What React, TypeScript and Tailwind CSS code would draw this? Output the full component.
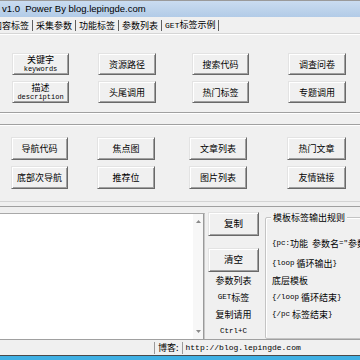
import type { ReactNode } from "react";

const CJK = "font-['Noto_Sans_CJK_SC',sans-serif]";
const MONO = "font-['Liberation_Mono','Noto_Sans_CJK_SC',monospace]";

function WinBtn({ className, children }: { className: string; children: ReactNode }) {
  return (
    <div
      className={[
        "shrink-0 flex flex-col items-center justify-center bg-[#f0f0f0] text-black leading-none",
        "border border-t-[#e3e3e3] border-l-[#e3e3e3] border-r-[#696969] border-b-[#696969]",
        "shadow-[inset_1px_1px_0_#ffffff,inset_-1px_-1px_0_#a0a0a0]",
        className,
      ].join(" ")}
    >
      {children}
    </div>
  );
}

function L({ children }: { children: ReactNode }) {
  return <span className={`${MONO} text-[7.5px]`}>{children}</span>;
}

const tabs = ["内容标签", "采集参数", "功能标签", "参数列表", "GET标签示例"];

export default function App() {
  return (
    <div className={`w-[360px] h-[360px] overflow-hidden bg-[#f0f0f0] flex flex-col ${CJK} text-[9px] text-black`}>
      {/* title bar */}
      <div className="h-[17px] shrink-0 border-t border-[#9a9a9a] bg-gradient-to-b from-[#cadcf0] to-[#b2cbe7] flex items-center pl-[2px]">
        <span className="font-['Liberation_Sans',sans-serif] text-[9.5px] whitespace-pre">v1.0  Power By blog.lepingde.com</span>
      </div>

      {/* tab strip */}
      <div className="h-[17px] shrink-0 flex items-center border-b border-[#d6d6d6] shadow-[0_1px_0_#ffffff] overflow-hidden">
        <div className="flex items-center ml-[-7px] whitespace-nowrap">
          {tabs.map((t) => (
            <div key={t} className="flex items-center">
              <span className="leading-none">
                {t.startsWith("GET") ? (
                  <>
                    <span className={`${MONO} text-[8px]`}>GET</span>标签示例
                  </>
                ) : (
                  t
                )}
              </span>
              <span className="mx-[3px] w-px h-[11px] bg-[#5f5f5f]" />
            </div>
          ))}
        </div>
      </div>

      {/* group 1 */}
      <div className="h-[79px] shrink-0 border-b border-[#a0a0a0] shadow-[0_1px_0_#ffffff] pt-[19px] flex flex-col gap-[6px]">
        <div className="flex h-[22px]">
          <WinBtn className="ml-[12px] w-[57px]">
            <span className="leading-[10px]">关键字</span>
            <span className={`${MONO} text-[7px] leading-[8px]`}>keywords</span>
          </WinBtn>
          <WinBtn className="ml-[29px] w-[58px]">资源路径</WinBtn>
          <WinBtn className="ml-[36px] w-[57px]">搜索代码</WinBtn>
          <WinBtn className="ml-[39px] w-[58px]">调查问卷</WinBtn>
        </div>
        <div className="flex h-[22px]">
          <WinBtn className="ml-[12px] w-[57px]">
            <span className="leading-[10px]">描述</span>
            <span className={`${MONO} text-[7px] leading-[8px]`}>description</span>
          </WinBtn>
          <WinBtn className="ml-[29px] w-[58px]">头尾调用</WinBtn>
          <WinBtn className="ml-[36px] w-[57px]">热门标签</WinBtn>
          <WinBtn className="ml-[39px] w-[58px]">专题调用</WinBtn>
        </div>
      </div>

      {/* group 2 */}
      <div className="mt-[11px] h-[77px] shrink-0 border-t border-[#a0a0a0] shadow-[inset_0_1px_0_#ffffff] pt-[12px] flex flex-col gap-[6px]">
        <div className="flex h-[23px]">
          <WinBtn className="ml-[11px] w-[57px]">导航代码</WinBtn>
          <WinBtn className="ml-[29px] w-[58px]">焦点图</WinBtn>
          <WinBtn className="ml-[34px] w-[58px]">文章列表</WinBtn>
          <WinBtn className="ml-[40px] w-[59px]">热门文章</WinBtn>
        </div>
        <div className="flex h-[23px]">
          <WinBtn className="ml-[11px] w-[57px]">底部次导航</WinBtn>
          <WinBtn className="ml-[29px] w-[58px]">推荐位</WinBtn>
          <WinBtn className="ml-[34px] w-[58px]">图片列表</WinBtn>
          <WinBtn className="ml-[40px] w-[59px]">友情链接</WinBtn>
        </div>
      </div>

      {/* splitter */}
      <div className="h-[11px] shrink-0 border-t border-[#d4d4d4] flex flex-col">
        <div className="mt-[4px] h-[6px] border-t border-[#a0a0a0] bg-[#efefef]" />
      </div>

      {/* bottom area */}
      <div className="h-[127px] shrink-0 flex">
        {/* text area */}
        <div className="shrink-0 w-[205px] mt-[1px] h-[126px] bg-white border-t border-[#a8a8a8] border-r border-r-[#c8c8c8] flex">
          <div className="flex-1" />
          <div className="w-[11px] bg-[#f7f7f7] border-r border-[#9a9a9a] flex flex-col items-center justify-between py-[6px]">
            <svg width="5" height="3" viewBox="0 0 5 3">
              <path d="M0 3 L2.5 0 L5 3 Z" fill="#8a8a8a" />
            </svg>
            <svg width="5" height="3" viewBox="0 0 5 3">
              <path d="M0 0 L2.5 3 L5 0 Z" fill="#8a8a8a" />
            </svg>
          </div>
        </div>

        {/* buttons column */}
        <div className="shrink-0 w-[60px] flex flex-col pl-[3px]">
          <WinBtn className="w-[51px] h-[24px] text-[9.5px]">复制</WinBtn>
          <WinBtn className="mt-[12px] w-[51px] h-[24px] text-[9.5px]">清空</WinBtn>
          <div className="w-[51px] flex flex-col items-center">
            <div className="h-[17px] flex items-center">参数列表</div>
            <div className="h-[17px] flex items-center">
              <L>GET</L>标签
            </div>
            <div className="h-[17px] flex items-center">复制请用</div>
            <div className="h-[17px] flex items-center">
              <L>Ctrl+C</L>
            </div>
          </div>
        </div>

        {/* group box */}
        <div className="shrink-0 pt-[5px]">
          <div className="relative w-[110px] h-[122px] border border-[#c4c4c4] rounded-[2px] shadow-[inset_1px_1px_0_#ffffff]">
            <span className="absolute left-[5px] top-[-6px] px-[2px] bg-[#f0f0f0] leading-[11px] whitespace-nowrap">
              模板标签输出规则
            </span>
            <div className="pl-[6px] pt-[17px] flex flex-col whitespace-nowrap">
              <div className="h-[17px] flex items-center">
                <L>{"{pc:"}</L>功能&nbsp;&nbsp;参数名<L>="</L>参数值<L>{'"}'}</L>
              </div>
              <div className="mt-[3px] h-[17px] flex items-center">
                <L>{"{loop "}</L>&nbsp;循环输出<L>{"}"}</L>
              </div>
              <div className="h-[17px] flex items-center">底层模板</div>
              <div className="h-[17px] flex items-center">
                <L>{"{/loop "}</L>&nbsp;循环结束<L>{"}"}</L>
              </div>
              <div className="h-[17px] flex items-center">
                <L>{"{/pc "}</L>&nbsp;标签结束<L>{"}"}</L>
              </div>
            </div>
          </div>
        </div>
      </div>

      {/* status bar */}
      <div className="h-[16px] shrink-0 border-t border-[#a0a0a0] flex items-center">
        <div className="w-[154px]" />
        <span className="w-px h-[12px] bg-[#9a9a9a] mr-[3px]" />
        <span>博客:</span>
        <span className="w-px h-[12px] bg-[#9a9a9a] mx-[3px]" />
        <span className={`${MONO} text-[8px]`}>http://blog.lepingde.com</span>
      </div>
      <div className="h-px shrink-0 bg-[#4a4a4a]" />
      <div className="flex-1 bg-[#3fb0e4]" />
    </div>
  );
}
